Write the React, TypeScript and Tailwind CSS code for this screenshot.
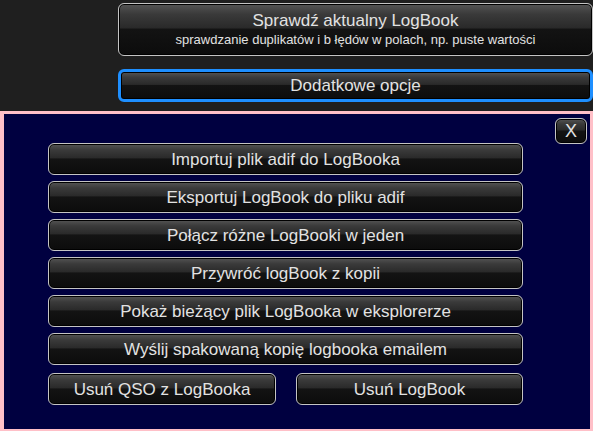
import React from 'react';

const glossy =
  'bg-[linear-gradient(to_bottom,#555_0%,#3a3a3a_20%,#2a2a2a_46%,#131313_50%,#0c0c0c_100%)] shadow-[inset_0_0_0_1px_#000] text-[#e2e2e2]';

const Btn: React.FC<{ label: string; className?: string }> = ({ label, className = '' }) => (
  <button
    className={`h-[32px] rounded-[6px] border border-[#c4c4c4] ${glossy} text-[17px] leading-none flex items-center justify-center ${className}`}
  >
    {label}
  </button>
);

const ITEMS = [
  'Importuj plik adif do LogBooka',
  'Eksportuj LogBook do pliku adif',
  'Połącz różne LogBooki w jeden',
  'Przywróć logBook z kopii',
  'Pokaż bieżący plik LogBooka w eksplorerze',
  'Wyślij spakowaną kopię logbooka emailem',
];

export default function App() {
  return (
    <div className="w-[593px] h-[431px] bg-[#1f1f1f] flex flex-col overflow-hidden font-['Liberation_Sans',Arial,sans-serif]">
      {/* top actions */}
      <div className="pl-[118px] pt-[3px] flex flex-col">
        <button
          className={`h-[53px] w-[475px] rounded-[6px] border border-[#c4c4c4] ${glossy} flex flex-col items-center justify-center`}
        >
          <span className="text-[17px] leading-[20px]">Sprawdź aktualny LogBook</span>
          <span className="text-[13px] leading-[16px] mt-[1px]">
            sprawdzanie duplikatów i b łędów w polach, np. puste wartości
          </span>
        </button>
        <button
          className={`mt-[13px] h-[33px] w-[475px] rounded-[6px] border-[3px] border-[#1e8fff] ${glossy} text-[17px] leading-none flex items-center justify-center`}
        >
          Dodatkowe opcje
        </button>
      </div>

      {/* options panel */}
      <div className="relative mt-[9px] flex-1 border-[3px] border-l-[4px] border-b-[2px] border-[#ffc0c8] bg-[#000040] pl-[44px] pt-[29px]">
        <button
          className={`absolute top-[4px] right-[3px] w-[32px] h-[26px] rounded-[6px] border border-[#c4c4c4] ${glossy} text-[18px] leading-none flex items-center justify-center`}
        >
          X
        </button>
        <div className="flex flex-col gap-[6px] w-[475px]">
          {ITEMS.map((t) => (
            <Btn key={t} label={t} className="w-[475px]" />
          ))}
        </div>
        <div className="flex gap-[20px] mt-[8px] w-[475px]">
          <Btn label="Usuń QSO z LogBooka" className="w-[228px]" />
          <Btn label="Usuń LogBook" className="w-[227px]" />
        </div>
      </div>
    </div>
  );
}
